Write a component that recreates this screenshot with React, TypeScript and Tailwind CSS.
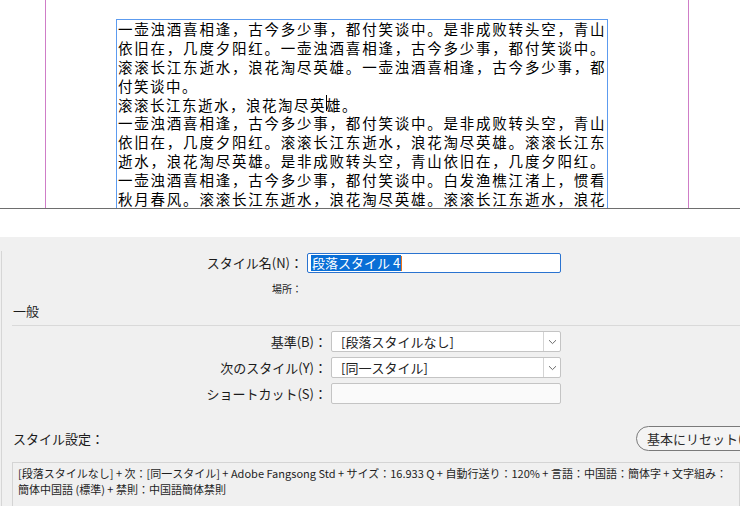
const lines = [
  { text: "一壶浊酒喜相逢，古今多少事，都付笑谈中。是非成败转头空，青山", full: true },
  { text: "依旧在，几度夕阳红。一壶浊酒喜相逢，古今多少事，都付笑谈中。", full: true },
  { text: "滚滚长江东逝水，浪花淘尽英雄。一壶浊酒喜相逢，古今多少事，都", full: true },
  { text: "付笑谈中。", full: false },
  { text: "CARET", full: false },
  { text: "一壶浊酒喜相逢，古今多少事，都付笑谈中。是非成败转头空，青山", full: true },
  { text: "依旧在，几度夕阳红。滚滚长江东逝水，浪花淘尽英雄。滚滚长江东", full: true },
  { text: "逝水，浪花淘尽英雄。是非成败转头空，青山依旧在，几度夕阳红。", full: true },
  { text: "一壶浊酒喜相逢，古今多少事，都付笑谈中。白发渔樵江渚上，惯看", full: true },
  { text: "秋月春风。滚滚长江东逝水，浪花淘尽英雄。滚滚长江东逝水，浪花", full: true },
];

function Chevron() {
  return (
    <svg width="9" height="6" viewBox="0 0 9 6" fill="none">
      <path d="M1 1.2 L4.5 4.6 L8 1.2" stroke="#6b6b6b" strokeWidth="1" />
    </svg>
  );
}

function Select({ value }: { value: string }) {
  return (
    <div className="flex h-[21px] w-[230px] items-stretch rounded-[2px] border border-[#c4c4c4] bg-white">
      <div className="flex-1 truncate pl-[9px] text-[13px] leading-[19px] text-[#222]">{value}</div>
      <div className="flex w-[17px] items-center justify-center border-l border-[#d4d4d4]">
        <Chevron />
      </div>
    </div>
  );
}

export default function App() {
  return (
    <div
      className="h-[506px] w-[740px] overflow-hidden bg-white"
      style={{ fontFamily: '"Noto Sans CJK JP", "Noto Sans", sans-serif' }}
    >
      {/* document canvas */}
      <div className="relative h-[209px] overflow-hidden border-b border-[#6e6e6e] bg-white">
        <div className="absolute left-[45px] top-0 h-full w-px bg-[#cf7dc7]" />
        <div className="absolute left-[688px] top-0 h-full w-px bg-[#cf7dc7]" />
        <div
          className="absolute left-[116px] top-[19px] h-[230px] w-[492px] border border-[#5c9bef] pl-px"
          style={{ fontFamily: '"Noto Sans CJK SC", sans-serif' }}
        >
          {lines.map((line, i) =>
            line.text === "CARET" ? (
              <div key={i} className="h-[18.9px] w-[488px] text-[14.5px] leading-[18.9px] tracking-[1.5px] text-black">
                滚滚长江东逝水，浪花淘尽英
                <span className="relative">
                  <span className="absolute left-0 top-[1px] h-[16px] w-px bg-black" />
                </span>
                雄。
              </div>
            ) : (
              <div
                key={i}
                className={
                  line.full
                    ? "h-[18.9px] w-[488px] text-justify text-[14.5px] leading-[18.9px] tracking-[1.5px] text-black [text-align-last:justify]"
                    : "h-[18.9px] w-[488px] text-[14.5px] leading-[18.9px] tracking-[1.5px] text-black"
                }
              >
                {line.text}
              </div>
            )
          )}
        </div>
      </div>

      <div className="h-[28px] bg-white" />

      {/* dialog */}
      <div className="h-[269px] bg-[#f0f0f0] pt-[14px] text-[#1b1b1b]">
        <div className="ml-px h-full border-l border-[#d6d6d6]">
          <div className="flex items-center pt-[2px]">
            <div className="w-[301px] text-right text-[13px] leading-[20px]">スタイル名(N)：</div>
            <div className="ml-[4px] flex h-[20px] w-[254px] items-center rounded-[2px] border border-[#2a73d0] bg-white pl-[3px]">
              <span className="bg-[#0a6fd6] px-px text-[13px] leading-[16px] text-white">段落スタイル 4</span>
              <span className="h-[15px] w-px bg-[#e8731c]" />
            </div>
          </div>

          <div className="mt-[10px] w-[300px] text-right text-[10px] leading-[12px] text-[#222]">場所：</div>

          <div className="mt-[7px] pl-[11px] text-[13px] leading-[18px]">一般</div>

          <div className="ml-[10px] mt-[5px] h-px bg-[#d9d9d9]" />

          <div className="mt-[5px] flex flex-col gap-[5px]">
            <div className="flex items-center">
              <div className="w-[325px] text-right text-[13px] leading-[21px]">基準(B)：</div>
              <div className="ml-[4px]">
                <Select value="[段落スタイルなし]" />
              </div>
            </div>
            <div className="flex items-center">
              <div className="w-[325px] text-right text-[13px] leading-[21px]">次のスタイル(Y)：</div>
              <div className="ml-[4px]">
                <Select value="[同一スタイル]" />
              </div>
            </div>
            <div className="flex items-center">
              <div className="w-[325px] text-right text-[13px] leading-[21px]">ショートカット(S)：</div>
              <div className="ml-[4px] h-[21px] w-[230px] rounded-[2px] border border-[#c4c4c4] bg-[#fafafa]" />
            </div>
          </div>

          <div className="mt-[22px] flex items-center">
            <div className="w-[634px] shrink-0 pl-[11px] text-[13px] leading-[18px]">スタイル設定：</div>
            <div className="flex h-[25px] shrink-0 items-center whitespace-nowrap rounded-full border border-[#7a7a7a] bg-[#f4f4f4] pl-[10px] pr-[12px] text-[13px] text-[#2b2b2b]">
              基本にリセット(R)
            </div>
          </div>

          <div className="ml-[10px] mt-[11px] h-[80px] whitespace-nowrap border border-[#d4d4d4] pl-[5px] pt-[2px] text-[11px] leading-[16px] text-[#1e1e1e]">
            <div>[段落スタイルなし] + 次：[同一スタイル] + Adobe Fangsong Std + サイズ：16.933 Q + 自動行送り：120% + 言語：中国語：簡体字 + 文字組み：</div>
            <div>簡体中国語 (標準) + 禁則：中国語簡体禁則</div>
          </div>
        </div>
      </div>
    </div>
  );
}
